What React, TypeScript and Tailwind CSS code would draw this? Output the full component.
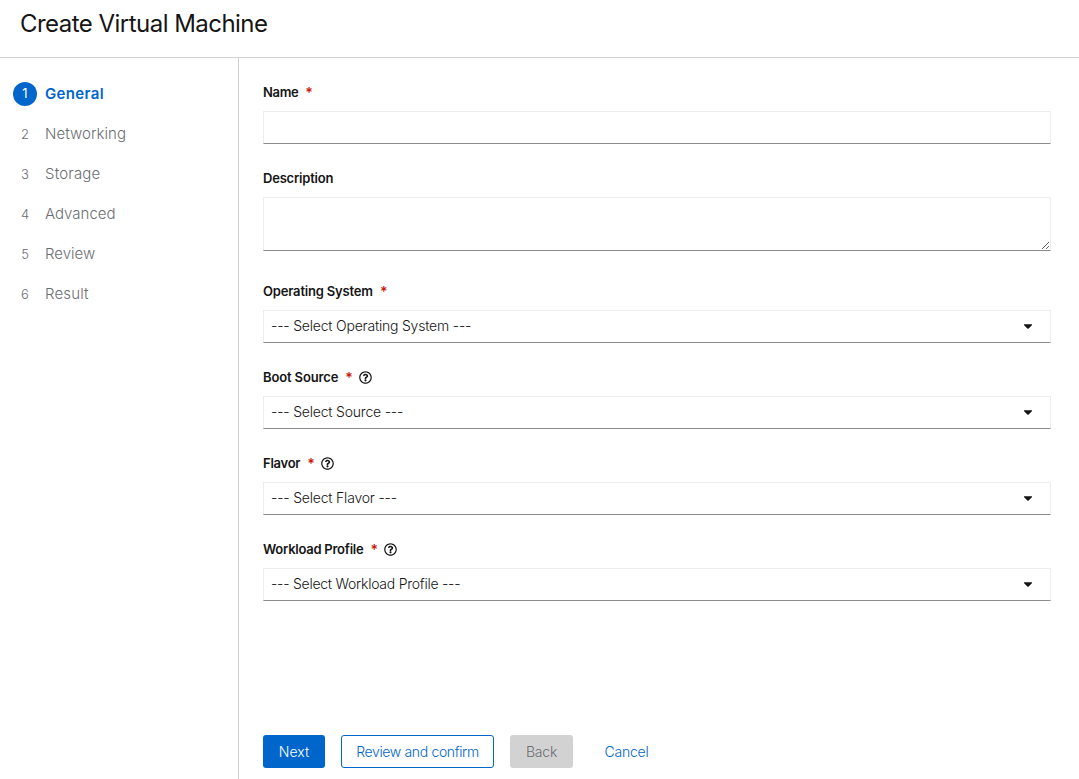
import { FaCaretDown, FaRegQuestionCircle } from "react-icons/fa";

const steps = [
  { label: "General", spacing: "tracking-[0.35px]" },
  { label: "Networking", spacing: "tracking-[0.05px]" },
  { label: "Storage", spacing: "tracking-[0.2px]" },
  { label: "Advanced", spacing: "tracking-[0px]" },
  { label: "Review", spacing: "tracking-[0px]" },
  { label: "Result", spacing: "tracking-[0.15px]" },
];

const box =
  "block w-full rounded-none border border-[#ededed] border-b-[#8a8d90] bg-white outline-none";

function Label({
  text,
  spacing,
  required,
  help,
}: {
  text: string;
  spacing: string;
  required?: boolean;
  help?: boolean;
}) {
  return (
    <div className="mb-2 flex h-[21px] items-center whitespace-nowrap text-[13px] font-semibold text-[#151515]">
      <span className={spacing}>{text}</span>
      {required && (
        <span className="ml-[7px] w-[7px] text-[14px] leading-none text-[#c9190b]">*</span>
      )}
      {help && <FaRegQuestionCircle className="ml-[7px] size-[13px]" />}
    </div>
  );
}

function SelectBox({ text, spacing }: { text: string; spacing: string }) {
  return (
    <button
      type="button"
      className={`${box} flex h-[33px] items-center justify-between pr-[15px] pb-[2px] pl-[7px] text-left text-[14px] text-[#151515]`}
    >
      <span className={`${spacing} font-[350] whitespace-pre`}>{text}</span>
      <FaCaretDown className="size-[14px]" />
    </button>
  );
}

export default function App() {
  return (
    <div className="flex h-[779px] w-full flex-col overflow-hidden bg-white font-['Inter',sans-serif] text-[#151515]">
      <header className="h-[58px] shrink-0 border-b border-[#d2d2d2] pt-[6px] pl-5">
        <h1 className="text-[24px] leading-9 tracking-[-0.53px] whitespace-nowrap">
          Create Virtual Machine
        </h1>
      </header>
      <div className="flex min-h-0 flex-1">
        <nav className="w-[239px] shrink-0 border-r border-[#d2d2d2] pt-6 pl-[13px]">
          <ol className="flex flex-col gap-4">
            {steps.map((step, i) => (
              <li key={step.label} className="flex h-6 items-center gap-2">
                <span
                  className={`flex size-6 items-center justify-center rounded-full text-[13px] ${
                    i === 0 ? "bg-[#0066cc] text-white" : "pt-px font-[350] text-[#6a6e73]"
                  }`}
                >
                  {i + 1}
                </span>
                <span
                  className={`text-[15px] ${step.spacing} ${
                    i === 0 ? "font-semibold text-[#0066cc]" : "font-[350] text-[#6a6e73]"
                  }`}
                >
                  {step.label}
                </span>
              </li>
            ))}
          </ol>
        </nav>
        <main className="flex min-w-0 flex-1 flex-col pt-6 pr-7 pb-[11px] pl-6">
          <form className="flex flex-col gap-6">
            <div>
              <Label text="Name" spacing="tracking-[-0.35px]" required />
              <input type="text" aria-label="Name" className={`${box} h-[33px]`} />
            </div>
            <div>
              <Label text="Description" spacing="tracking-[-0.2px]" />
              <textarea
                aria-label="Description"
                className={`${box} mb-[6px] h-[54px] resize-y`}
              />
            </div>
            <div>
              <Label text="Operating System" spacing="tracking-[-0.18px]" required />
              <SelectBox text="--- Select Operating System ---" spacing="tracking-[-0.2px]" />
            </div>
            <div>
              <Label text="Boot Source" spacing="tracking-[-0.13px]" required help />
              <SelectBox text="--- Select Source ---" spacing="tracking-[-0.2px]" />
            </div>
            <div>
              <Label text="Flavor" spacing="tracking-[-0.25px]" required help />
              <SelectBox text="--- Select Flavor ---" spacing="tracking-[-0.2px]" />
            </div>
            <div>
              <Label text="Workload Profile" spacing="tracking-[-0.25px]" required help />
              <SelectBox text="--- Select Workload Profile ---" spacing="tracking-[-0.25px]" />
            </div>
          </form>
          <footer className="mt-auto flex gap-4 text-[14px] font-[350] whitespace-nowrap">
            <button type="button" className="h-[33px] w-[62px] rounded-[3px] bg-[#0066cc] text-white">
              Next
            </button>
            <button
              type="button"
              className="h-[33px] w-[153px] rounded-[3px] border border-[#0066cc] tracking-[-0.35px] text-[#0066cc]"
            >
              Review and confirm
            </button>
            <button
              type="button"
              disabled
              className="h-[33px] w-[63px] rounded-[3px] bg-[#d2d2d2] tracking-[-0.2px] text-[#6a6e73]"
            >
              Back
            </button>
            <button type="button" className="h-[33px] w-[75px] tracking-[-0.25px] text-[#0066cc]">
              Cancel
            </button>
          </footer>
        </main>
      </div>
    </div>
  );
}
